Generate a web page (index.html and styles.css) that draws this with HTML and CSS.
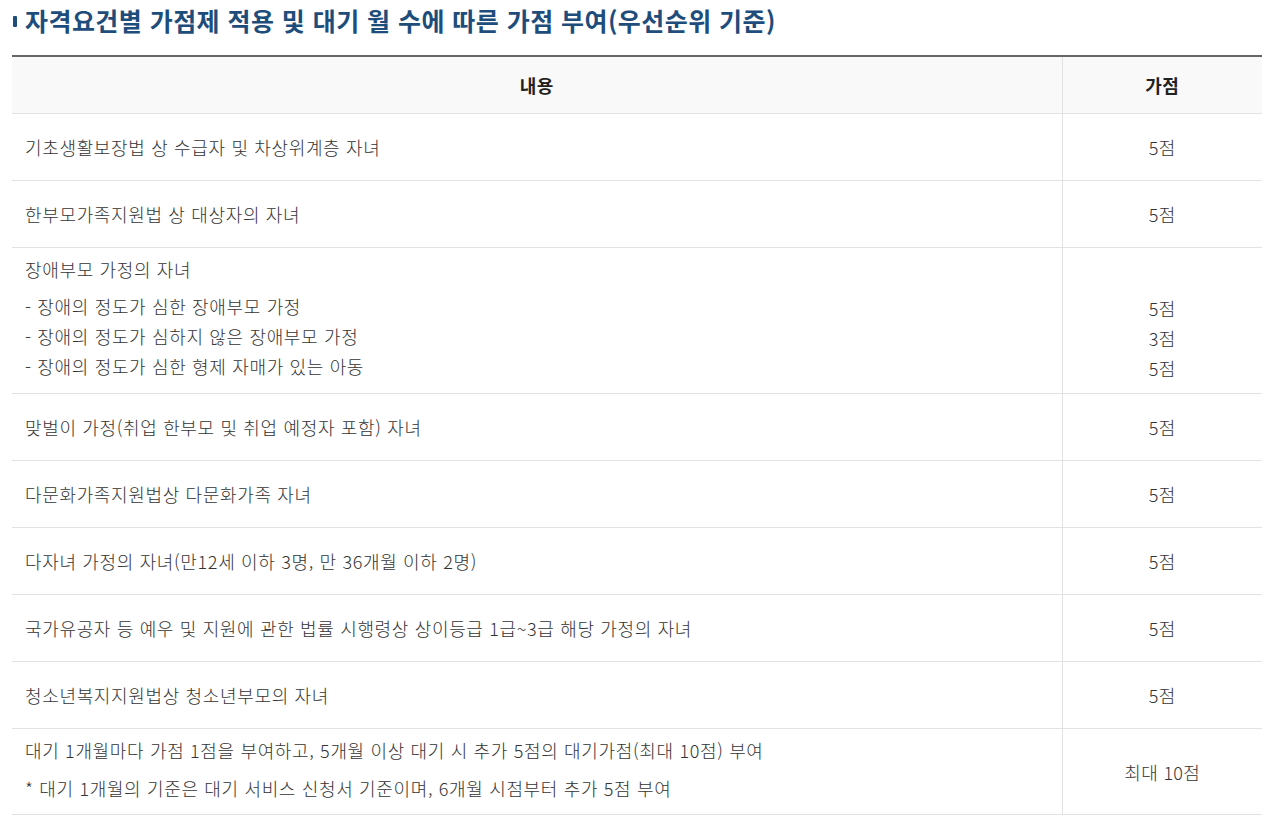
FILE: index.html
```html
<!DOCTYPE html>
<html lang="ko">
<head>
<meta charset="utf-8">
<link rel="stylesheet" href="styles.css">
</head>
<body>
<div class="wrap">
  <h2 class="title"><span class="bar"></span>자격요건별 가점제 적용 및 대기 월 수에 따른 가점 부여(우선순위 기준)</h2>
  <table class="tbl">
    <colgroup><col class="c1"><col class="c2"></colgroup>
    <thead>
      <tr><th>내용</th><th>가점</th></tr>
    </thead>
    <tbody>
      <tr><td>기초생활보장법 상 수급자 및 차상위계층 자녀</td><td class="pt">5점</td></tr>
      <tr><td>한부모가족지원법 상 대상자의 자녀</td><td class="pt">5점</td></tr>
      <tr class="multi"><td><div class="first">장애부모 가정의 자녀</div><div class="sub">- 장애의 정도가 심한 장애부모 가정</div><div class="sub">- 장애의 정도가 심하지 않은 장애부모 가정</div><div class="sub">- 장애의 정도가 심한 형제 자매가 있는 아동</div></td><td class="pt"><div class="first">&nbsp;</div><div class="sub">5점</div><div class="sub">3점</div><div class="sub">5점</div></td></tr>
      <tr><td>맞벌이 가정(취업 한부모 및 취업 예정자 포함) 자녀</td><td class="pt">5점</td></tr>
      <tr><td>다문화가족지원법상 다문화가족 자녀</td><td class="pt">5점</td></tr>
      <tr><td>다자녀 가정의 자녀(만12세 이하 3명, 만 36개월 이하 2명)</td><td class="pt">5점</td></tr>
      <tr><td>국가유공자 등 예우 및 지원에 관한 법률 시행령상 상이등급 1급~3급 해당 가정의 자녀</td><td class="pt">5점</td></tr>
      <tr><td>청소년복지지원법상 청소년부모의 자녀</td><td class="pt">5점</td></tr>
      <tr class="last"><td><div class="l">대기 1개월마다 가점 1점을 부여하고, 5개월 이상 대기 시 추가 5점의 대기가점(최대 10점) 부여</div><div class="l">* 대기 1개월의 기준은 대기 서비스 신청서 기준이며, 6개월 시점부터 추가 5점 부여</div></td><td class="pt">최대 10점</td></tr>
    </tbody>
  </table>
</div>
</body>
</html>
```

FILE: styles.css
```css
html, body {
  margin: 0;
  padding: 0;
  background: #fff;
}
body {
  font-family: "Noto Sans CJK KR", "Noto Sans", sans-serif;
  color: #333;
}
.wrap {
  padding: 0 12px;
}
.title {
  margin: 0;
  padding: 3px 0 0 1px;
  height: 55px;
  box-sizing: border-box;
  font-size: 25px;
  font-weight: 700;
  color: #1e4d7b;
  line-height: 34px;
  display: flex;
  align-items: flex-start;
  letter-spacing: 0.45px;
}
.bar {
  flex: none;
  width: 4px;
  height: 11px;
  border-radius: 1px;
  background: #1e4d7b;
  margin: 13px 8px 0 0;
}
.tbl {
  width: 1250px;
  border-collapse: collapse;
  border-top: 2px solid #666;
  table-layout: fixed;
  font-size: 18px;
}
.c1 { width: 1050px; }
.c2 { width: 200px; }
.tbl th {
  background: #f9f9f9;
  height: 56px;
  font-weight: 700;
  color: #222;
  font-size: 18px;
  border-bottom: 1px solid #e2e2e2;
  padding: 0;
  letter-spacing: 0.5px;
}
.tbl th + th, .tbl td + td {
  border-left: 1px solid #e2e2e2;
}
.tbl td {
  height: 66px;
  padding: 0 13px;
  border-bottom: 1px solid #e2e2e2;
  font-weight: 300;
  color: #333;
  vertical-align: middle;
  letter-spacing: 0.65px;
}
.tbl td.pt {
  text-align: center;
  padding: 0;
  letter-spacing: 0.3px;
}
.multi td {
  height: auto;
  padding-top: 8px;
  padding-bottom: 12px;
}
.multi .first {
  line-height: 26px;
  margin-bottom: 9px;
}
.multi .sub {
  line-height: 30px;
}
.last td {
  height: auto;
  padding-top: 2px;
  padding-bottom: 7px;
}
.last .l {
  line-height: 38px;
}
```
